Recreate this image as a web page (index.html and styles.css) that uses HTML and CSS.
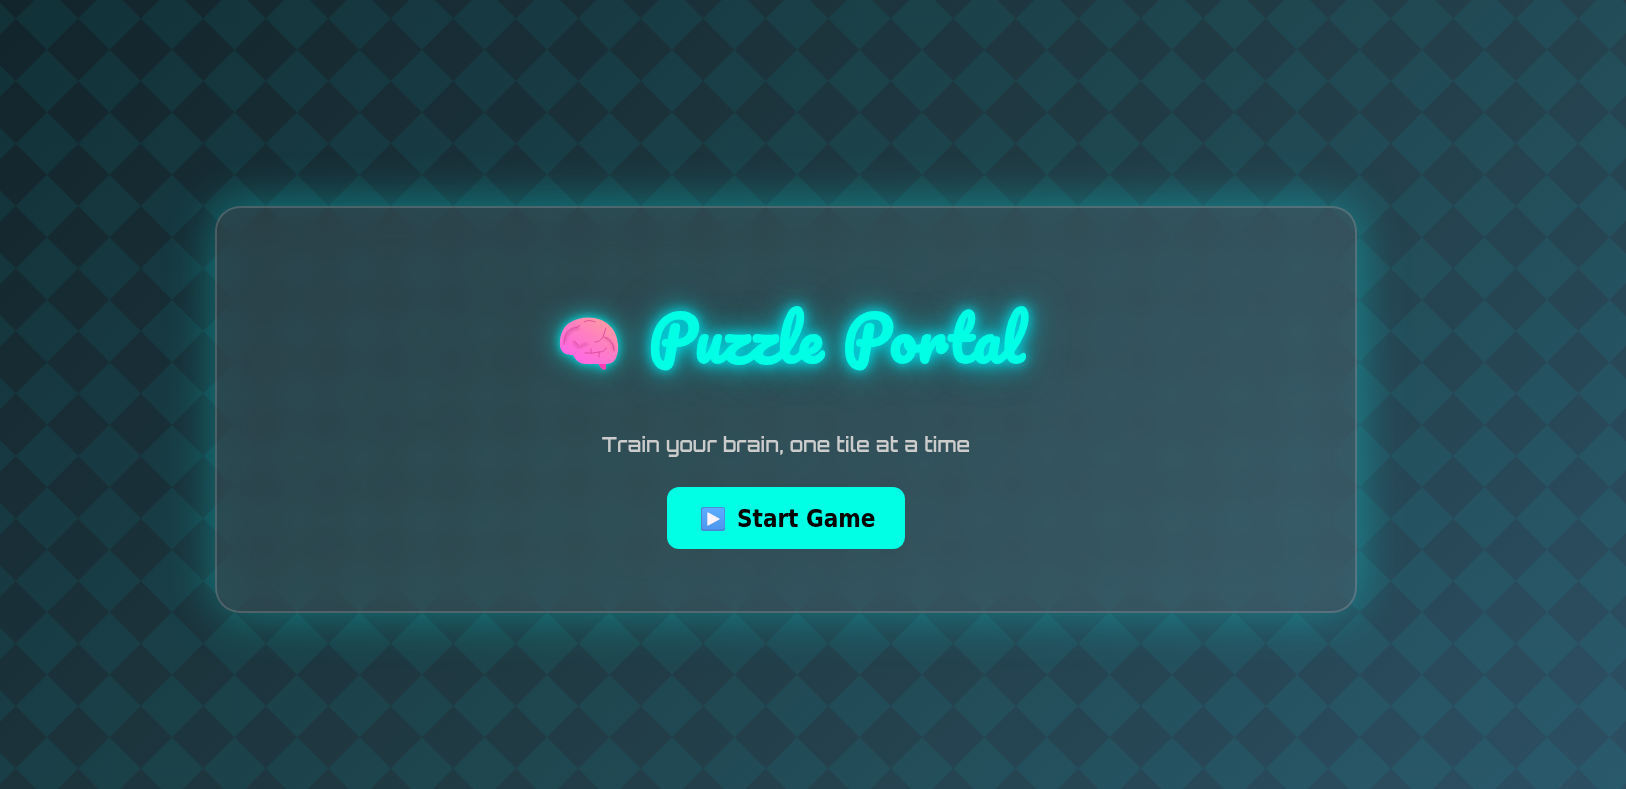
FILE: index.html
```html
<!DOCTYPE html>
<html lang="en">
<head>
<meta charset="utf-8">
<title>Puzzle Portal</title>
<link rel="stylesheet" href="styles.css">
</head>
<body>
<main class="card">
  <h1 class="title">
    <svg class="brain" viewBox="0 0 60 54" aria-hidden="true">
      <defs>
        <linearGradient id="lobe" x1=".9" y1=".1" x2=".25" y2=".9">
          <stop offset="0" stop-color="#ff9d9f"/>
          <stop offset=".45" stop-color="#ff80c0"/>
          <stop offset="1" stop-color="#ff68e6"/>
        </linearGradient>
        <filter id="soft" x="-10%" y="-10%" width="120%" height="120%"><feGaussianBlur stdDeviation=".9"/></filter>
      </defs>
      <path d="M38 45h9v7q-3 2-5-1z" fill="#ff3fb6"/>
      <path d="M1 29C0 19 4 9 12 5C23-2 42-1 51 9C58 15 61 29 58 38Q56 47 47 47H27Q18 47 14 38C7 38 2 36 1 29Z" fill="url(#lobe)"/>
      <path d="M6 25C7 17 11 12 20 11M14 25L20 31M20 31Q24 27 29 27M46 21Q54 24 55 33" fill="none" stroke="#cf4a9b" stroke-width="2.4" opacity=".5" filter="url(#soft)"/>
      <g fill="none" stroke="#de4c9c" stroke-width=".95" stroke-linecap="round" stroke-linejoin="round">
        <path d="M5 27C5 17 9 11 19 10L21 8M25 5Q30 2 36 5M47 11L44 20Q41 25 36 25M45 20Q55 23 55 34M15 24L19 28M26 36Q32 37 40 35Q46 35 47 31M32 32V36M40 35V40"/>
      </g>
    </svg>
    <span class="name">Puzzle Portal</span>
  </h1>
  <p class="tagline">Train your brain, one tile at a time</p>
  <button class="start" type="button">
    <svg class="play" viewBox="0 0 24 24" aria-hidden="true">
      <defs>
        <linearGradient id="key" x1="0" y1="0" x2="0" y2="1">
          <stop offset="0" stop-color="#5aaeff"/>
          <stop offset="1" stop-color="#4f96ee"/>
        </linearGradient>
      </defs>
      <rect width="24" height="24" rx="2.5" fill="#4d83d0"/>
      <rect x="1" y=".8" width="22.4" height="21.7" rx="2" fill="url(#key)"/>
      <path d="M7 6v12l11-6z" fill="#fbf3ff" stroke="#fbf3ff" stroke-width="1.4" stroke-linejoin="round"/>
    </svg>
    <span class="label">Start Game</span>
  </button>
</main>
</body>
</html>
```
FILE: styles.css
```css
* { box-sizing: border-box; }
body {
  margin: 0;
  height: 789px;
  overflow: hidden;
  padding: 206px 269px 176px 215px;
  background:
    linear-gradient(45deg, rgba(0,255,255,.058) 25%, transparent 25%, transparent 75%, rgba(0,255,255,.058) 75%) 47px 18.5px / 62.5px 62.5px,
    linear-gradient(-45deg, rgba(0,255,255,.058) 25%, transparent 25%, transparent 75%, rgba(0,255,255,.058) 75%) 47px 18.5px / 62.5px 62.5px,
    linear-gradient(135deg, #12242b, #203a43 50%, #2c5063);
}
.card {
  height: 407px;
  display: flex;
  flex-direction: column;
  align-items: center;
  padding-top: 86px;
  border: 2px solid rgba(255,255,255,.16);
  border-radius: 25px;
  background: rgba(255,255,255,.08);
  backdrop-filter: blur(18px);
  box-shadow: 0 0 50px rgba(0,255,255,.35);
}
.title {
  height: 120px;
  margin: 0;
  padding-left: 16px;
  display: flex;
  align-items: flex-start;
  gap: 30px;
  color: #00ffe5;
}
.brain {
  width: 60px;
  height: 54px;
  margin-top: 23px;
  overflow: visible;
  filter: drop-shadow(0 0 5px #00dfe0) drop-shadow(0 0 12px rgba(0,223,224,.7));
}
.name {
  width: 380px;
  font: 700 60px/88px Pacifico, Lato, sans-serif;
  letter-spacing: 1px;
  word-spacing: 2.5px;
  font-feature-settings: "liga" 1, "clig" 1, "calt" 1;
  white-space: nowrap;
  text-shadow: 0 0 12px #00dce6, 0 0 25px #00c8d2, 0 0 45px rgba(0,200,210,.4);
}
.tagline {
  height: 42px;
  margin: 10px 0 21px;
  font: 600 20px/42px Orbitron, "DejaVu Sans", sans-serif;
  color: #ccc;
  white-space: nowrap;
}
.start {
  width: 238px;
  height: 62px;
  padding: 0 0 0 34px;
  display: flex;
  align-items: center;
  gap: 12px;
  border: 0;
  border-radius: 12px;
  background: #00ffe5;
  color: #000;
}
.play { width: 24px; height: 24px; margin-top: 2px; }
.label {
  padding-top: 2px;
  font: bold 24px/60px Tahoma, "DejaVu Sans Condensed", "DejaVu Sans", sans-serif;
  white-space: nowrap;
}
```
